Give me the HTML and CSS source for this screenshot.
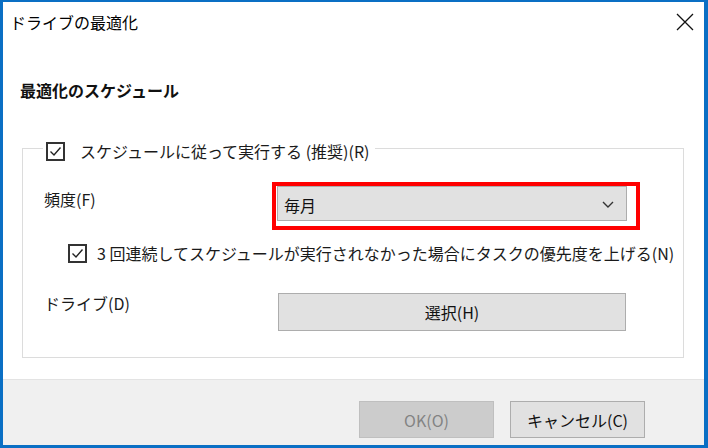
FILE: index.html
```html
<!DOCTYPE html>
<html lang="ja">
<head>
  <meta charset="UTF-8" />
  <title>ドライブの最適化</title>
  <link rel="stylesheet" href="styles.css">
</head>
<body>
  <div class="window">
    <div class="titlebar">
      <span class="title">ドライブの最適化</span>
      <span class="close">
        <svg width="18" height="18" viewBox="0 0 18 18"><path d="M1 1 L17 17 M17 1 L1 17" stroke="#111" stroke-width="1.3" fill="none"/></svg>
      </span>
    </div>

    <div class="content">
      <h2 class="heading">最適化のスケジュール</h2>

      <fieldset class="group">
        <legend>
          <label class="check first">
            <span class="box"><svg width="15" height="15" viewBox="0 0 15 15"><path d="M2.5 7.5 L6 11 L12.5 3.5" stroke="#222" stroke-width="1.4" fill="none"/></svg></span>
            スケジュールに従って実行する (推奨)(R)
          </label>
        </legend>

        <div class="row">
          <span class="label">頻度(F)</span>
          <div class="combo">
            <span>毎月</span>
            <svg class="chevron" width="12" height="7" viewBox="0 0 12 7"><path d="M1 1 L6 6 L11 1" stroke="#333" stroke-width="1.4" fill="none"/></svg>
            <span class="mark"></span>
          </div>
        </div>

        <label class="check second">
          <span class="box"><svg width="15" height="15" viewBox="0 0 15 15"><path d="M2.5 7.5 L6 11 L12.5 3.5" stroke="#222" stroke-width="1.4" fill="none"/></svg></span>
          3&nbsp;回連続してスケジュールが実行されなかった場合にタスクの優先度を上げる(N)
        </label>

        <div class="row drive">
          <span class="label">ドライブ(D)</span>
          <button class="btn wide">選択(H)</button>
        </div>
      </fieldset>
    </div>

    <div class="footer">
      <button class="btn disabled">OK(O)</button>
      <button class="btn">キャンセル(C)</button>
    </div>
  </div>
</body>
</html>
```

FILE: styles.css
```css
body {
  margin: 0;
  font-family: "Noto Sans CJK JP", "Noto Sans", sans-serif;
  font-size: 16px;
  line-height: 20px;
  color: #1a1a1a;
}

.window {
  width: 708px;
  height: 448px;
  box-sizing: border-box;
  border-style: solid;
  border-color: #0a6fc4;
  border-width: 2px 4px 3px 3px;
  background: #fff;
  display: flex;
  flex-direction: column;
}

.titlebar {
  height: 40px;
  display: flex;
  align-items: center;
  justify-content: space-between;
  padding: 0 10px 0 7px;
}

.title {
  color: #000;
}

.close {
  display: flex;
}

.content {
  flex: 1;
}

.heading {
  margin: 38px 0 0 17px;
  font-size: 16px;
  line-height: 20px;
  font-weight: bold;
  color: #111;
}

.group {
  margin: 41px 20px 0 19px;
  padding: 31px 0 26px 21px;
  border: 1px solid #dcdcdc;
  min-width: 0;
}

.group legend {
  padding: 0 0 0 3px;
  margin-left: -1px;
  height: 14px;
}

.check {
  display: flex;
  align-items: center;
  gap: 10px;
  height: 20px;
}

.check.first {
  gap: 15px;
  padding-right: 6px;
  background: #fff;
}

.check.second {
  margin: 22px 0 0 24px;
}

.box {
  width: 19px;
  height: 19px;
  box-sizing: border-box;
  border: 2px solid #333;
  display: flex;
  align-items: center;
  justify-content: center;
  flex: none;
}

.row {
  display: flex;
  align-items: flex-start;
}

.row .label {
  width: 233px;
  padding-top: 3px;
}

.row.drive {
  margin-top: 30px;
}

.row.drive .label {
  width: 234px;
  padding-top: 0;
}

.combo {
  position: relative;
  width: 350px;
  height: 35px;
  box-sizing: border-box;
  border: 1px solid #adadad;
  background: #e1e1e1;
  display: flex;
  align-items: center;
  justify-content: space-between;
  padding: 2px 12px 0 6px;
  color: #111;
}

.mark {
  position: absolute;
  left: -6px;
  top: -5px;
  width: 368px;
  height: 48px;
  box-sizing: border-box;
  border: 4px solid #ff0000;
}

.btn {
  font-family: inherit;
  font-size: 16px;
  color: #111;
  background: #e1e1e1;
  border: 1px solid #adadad;
  height: 37px;
  width: 135px;
  padding: 0;
}

.btn.wide {
  width: 348px;
  height: 38px;
}

.btn.disabled {
  background: #cccccc;
  border-color: #bfbfbf;
  color: #838383;
}

.footer {
  height: 66px;
  box-sizing: border-box;
  border-top: 1px solid #e3e3e3;
  background: #f0f0f0;
  display: flex;
  justify-content: flex-end;
  gap: 16px;
  padding: 21px 59px 0 0;
}
```
